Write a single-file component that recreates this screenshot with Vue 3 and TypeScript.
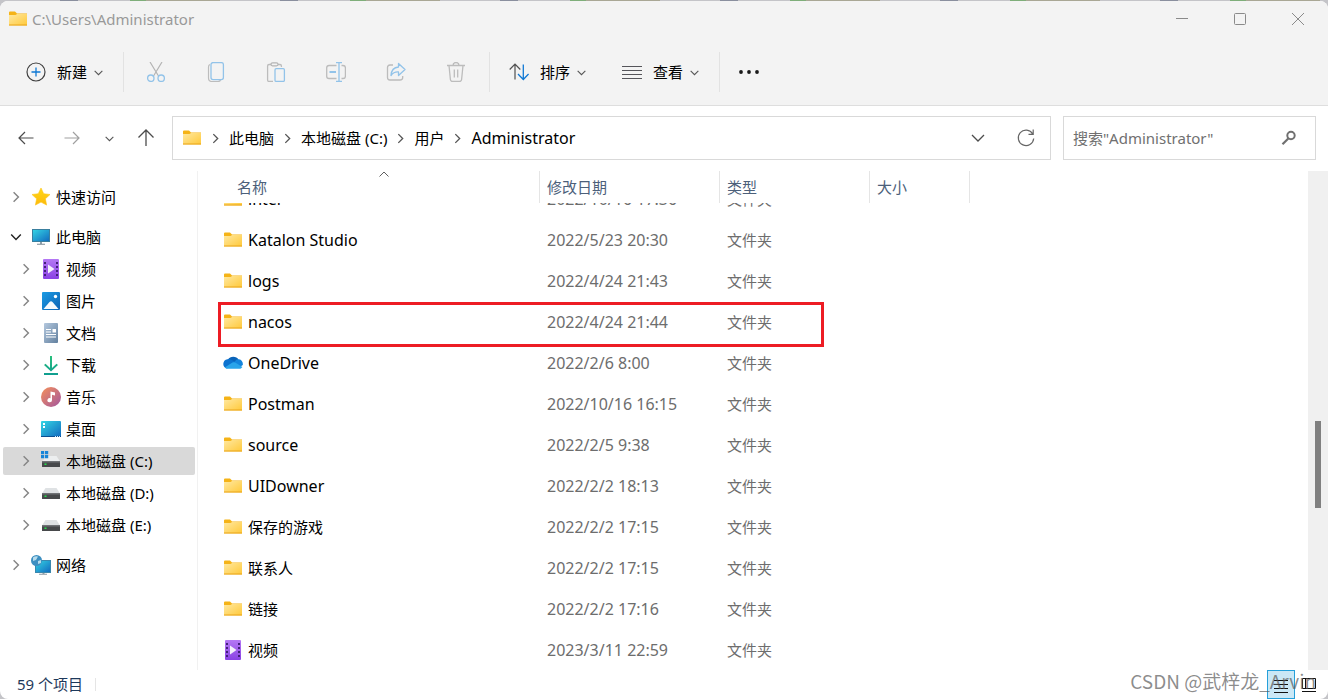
<script setup lang="ts">
import { onMounted, ref } from 'vue'

interface TreeItem {
  label: string
  icon: string
  level: 1 | 2
  open?: boolean
  selected?: boolean
  spaced?: boolean
}

interface FileRow {
  name: string
  icon: string
  date: string
  marked?: boolean
}

const tools = [
  { icon: 'cut', label: '剪切' },
  { icon: 'copy', label: '复制' },
  { icon: 'paste', label: '粘贴' },
  { icon: 'rename', label: '重命名' },
  { icon: 'share', label: '共享' },
  { icon: 'trash', label: '删除' },
]

const crumbs = ['此电脑', '本地磁盘 (C:)', '用户', 'Administrator']

const tree: TreeItem[] = [
  { label: '快速访问', icon: 'star', level: 1 },
  { label: '此电脑', icon: 'pc', level: 1, open: true, spaced: true },
  { label: '视频', icon: 'video', level: 2 },
  { label: '图片', icon: 'picture', level: 2 },
  { label: '文档', icon: 'document', level: 2 },
  { label: '下载', icon: 'download', level: 2 },
  { label: '音乐', icon: 'music', level: 2 },
  { label: '桌面', icon: 'desktop', level: 2 },
  { label: '本地磁盘 (C:)', icon: 'drive-c', level: 2, selected: true },
  { label: '本地磁盘 (D:)', icon: 'drive', level: 2 },
  { label: '本地磁盘 (E:)', icon: 'drive', level: 2 },
  { label: '网络', icon: 'network', level: 1, spaced: true },
]

const files: FileRow[] = [
  { name: 'intel', icon: 'folder', date: '2022/10/16 17:36' },
  { name: 'Katalon Studio', icon: 'folder', date: '2022/5/23 20:30' },
  { name: 'logs', icon: 'folder', date: '2022/4/24 21:43' },
  { name: 'nacos', icon: 'folder', date: '2022/4/24 21:44', marked: true },
  { name: 'OneDrive', icon: 'cloud', date: '2022/2/6 8:00' },
  { name: 'Postman', icon: 'folder', date: '2022/10/16 16:15' },
  { name: 'source', icon: 'folder', date: '2022/2/5 9:38' },
  { name: 'UIDowner', icon: 'folder', date: '2022/2/2 18:13' },
  { name: '保存的游戏', icon: 'folder', date: '2022/2/2 17:15' },
  { name: '联系人', icon: 'folder', date: '2022/2/2 17:15' },
  { name: '链接', icon: 'folder', date: '2022/2/2 17:16' },
  { name: '视频', icon: 'video', date: '2023/3/11 22:59' },
]

const isLatin = (s: string) => /^[\x20-\x7e]+$/.test(s)

const query = ref('')
const scroller = ref<HTMLElement | null>(null)

onMounted(() => {
  if (scroller.value) scroller.value.scrollTop = 25
})
</script>

<template>
  <div class="backdrop">
    <svg class="sprite" width="0" height="0" aria-hidden="true">
      <defs>
        <linearGradient id="g-folder" x1="0" y1="0" x2="1" y2="1">
          <stop offset="0" stop-color="#ffe8a0" /><stop offset="1" stop-color="#ffc93a" />
        </linearGradient>
        <linearGradient id="g-screen" x1="0" y1="0" x2="1" y2="1">
          <stop offset="0" stop-color="#35d6e4" /><stop offset="1" stop-color="#1169bf" />
        </linearGradient>
        <linearGradient id="g-video" x1="0" y1="0" x2="0" y2="1">
          <stop offset="0" stop-color="#b478f4" /><stop offset="1" stop-color="#8a42e4" />
        </linearGradient>
        <linearGradient id="g-picture" x1="0" y1="0" x2="1" y2="1">
          <stop offset="0" stop-color="#1b9be4" /><stop offset="1" stop-color="#0d62b4" />
        </linearGradient>
        <linearGradient id="g-doc" x1="0" y1="0" x2="1" y2="1">
          <stop offset="0" stop-color="#b4c8de" /><stop offset="1" stop-color="#62809f" />
        </linearGradient>
        <linearGradient id="g-music" x1="0" y1="0" x2="1" y2="1">
          <stop offset="0" stop-color="#f6915a" /><stop offset="1" stop-color="#a2569f" />
        </linearGradient>
        <linearGradient id="g-star" x1="0" y1="0" x2="0" y2="1">
          <stop offset="0" stop-color="#ffd817" /><stop offset="1" stop-color="#fdb90c" />
        </linearGradient>
        <linearGradient id="g-download" x1="0" y1="0" x2="0" y2="1">
          <stop offset="0" stop-color="#29c07c" /><stop offset="1" stop-color="#0f9d90" />
        </linearGradient>
      </defs>

      <symbol id="folder" viewBox="0 0 20 20">
        <path d="M1 3.600Q1 2.400 2 2.400h5L9 4.400h10V9H1z" fill="#f5b317" />
        <path d="M1 6h6.500l1.600-1H19v11.500H1z" fill="url(#g-folder)" />
        <path d="M1 15.500h18v1H1z" fill="#e9a51d" />
      </symbol>
      <symbol id="cloud" viewBox="0 0 20 20">
        <path d="M5 6.500A6 5.500 0 0 1 15.500 6.500L12 12z" fill="#0a63b8" />
        <path d="M4.500 6.200C7 5.500 9 7.200 13 9.500L4 15.600C-1.500 14.500-.5 6.500 4.500 6.200z" fill="#0c72cf" />
        <path d="M10 10.500l3.500-4C18 5.500 20.300 8.500 19.800 12l-3 2z" fill="#1384dc" />
        <path d="M2 14.300l7.500-4.700c1.500-.6 2.500-.2 3.500.4l6.400 4c-.8 1.300-2 1.800-3.400 1.800H5C3.500 15.800 2.700 15.300 2 14.300z" fill="#29a4ea" />
      </symbol>
      <symbol id="star" viewBox="0 0 20 20">
        <path d="M10 1l2.700 5.700 6.300.8-4.600 4.300 1.200 6.300L10 15.100 4.400 18.100l1.200-6.300L1 7.500l6.300-.8z" fill="url(#g-star)" stroke="#fec515" stroke-width=".6" stroke-linejoin="round" />
      </symbol>
      <symbol id="pc" viewBox="0 0 20 20">
        <path d="M9 14.500h2V17H9z" fill="#8fa0ac" /><path d="M6 16.800h8v1H6z" fill="#7b8a94" />
        <rect x="1.500" y="2.500" width="17" height="12" fill="url(#g-screen)" stroke="#3a7f9e" />
      </symbol>
      <symbol id="video" viewBox="0 0 20 20">
        <rect x="2" y="0" width="16" height="20" rx="1" fill="url(#g-video)" />
        <path d="M4 3v15M16 3v15" stroke="#43207a" stroke-width="2" stroke-dasharray="2 2" />
        <path d="M7 5.500v9L13.500 10z" fill="#f3effb" />
      </symbol>
      <symbol id="picture" viewBox="0 0 20 20">
        <rect x="1" y="1" width="18" height="18" rx="1" fill="url(#g-picture)" />
        <path d="M2.500 18l6-7q1.500-1.500 3 0l6 7z" fill="#f4f9fd" /><circle cx="14.500" cy="5.500" r="1.700" fill="#fff" />
      </symbol>
      <symbol id="document" viewBox="0 0 20 20">
        <rect x="3" y="0" width="14" height="20" rx="1" fill="url(#g-doc)" />
        <path d="M5 6.500h5M5 9h5M5 11.500h10M5 14h10" stroke="#fff" stroke-width="1.200" />
        <path d="M11.500 6h3.500v3.500h-3.500z" fill="#fff" />
      </symbol>
      <symbol id="download" viewBox="0 0 20 20">
        <path d="M9 1h2v12l4.500-4.300L17 10l-7 6.400L3 10l1.500-1.300L9 13zM3 18h14v2H3z" fill="url(#g-download)" />
      </symbol>
      <symbol id="music" viewBox="0 0 20 20">
        <circle cx="10" cy="10" r="10" fill="url(#g-music)" />
        <path d="M9.500 4.500l4.500 1v3l-3-.7v5.400a2.300 2.100 0 1 1-1.500-2z" fill="#fff" />
      </symbol>
      <symbol id="desktop" viewBox="0 0 20 20">
        <rect x="0" y="2" width="20" height="16" rx="1" fill="url(#g-screen)" />
        <path d="M2 4h2v2H2zM2 7h2v2H2z" fill="#fff" /><path d="M0 17h20v1H0z" fill="#0b4f91" />
        <path d="M14 17.500h1M16 17.500h1M18 17.500h1" stroke="#d7eaf8" />
      </symbol>
      <symbol id="drive" viewBox="0 0 20 20">
        <path d="M4.500 5h11L19 10.500H1z" fill="#dfe2e4" /><rect x="1" y="10" width="18" height="6" rx=".5" fill="#47494b" />
        <path d="M1 10h18v1.500H1z" fill="#707376" /><path d="M3.500 12.500h2v1.500h-2z" fill="#25e04c" />
      </symbol>
      <symbol id="drive-c" viewBox="0 0 20 20">
        <path d="M6 5h9.500L19 10.500H1z" fill="#eceeef" /><rect x="1" y="10" width="18" height="6" rx=".5" fill="#47494b" />
        <path d="M1 10h18v1.500H1z" fill="#707376" /><path d="M3.500 12.500h2v1.500h-2z" fill="#25e04c" />
        <path d="M0 0h3.200v3.200H0zM4 0h3.200v3.200H4zM0 4h3.200v3.200H0zM4 4h3.200v3.200H4z" fill="#1784d8" />
      </symbol>
      <symbol id="network" viewBox="0 0 20 20">
        <path d="M11.500 17h2v2h-2z" fill="#8fa0ac" /><path d="M8 18.800h8v1H8z" fill="#8c9aa3" />
        <rect x="4.500" y="5.500" width="15" height="12" fill="url(#g-screen)" stroke="#3a87ae" />
        <circle cx="5.500" cy="5.500" r="5.500" fill="#3d8fc1" />
        <path d="M2 2.500Q4.500.5 7 1.500L5 5 2 6zM7 6l3-1v3L7 9z" fill="#b7dcec" />
      </symbol>

      <symbol id="plus" viewBox="0 0 20 20">
        <circle cx="10" cy="10" r="9" fill="none" stroke="#404040" stroke-width="1.200" />
        <path d="M5.500 10h9M10 5.500v9" stroke="#0f78d4" stroke-width="1.300" />
      </symbol>
      <symbol id="cut" viewBox="0 0 20 20">
        <path d="M4 0l8.500 14M16 0L7.500 14" fill="none" stroke="#b4b4b4" stroke-width="1.200" />
        <circle cx="4.800" cy="16.200" r="3.200" fill="none" stroke="#92c3e9" stroke-width="1.300" />
        <circle cx="15.200" cy="16.200" r="3.200" fill="none" stroke="#92c3e9" stroke-width="1.300" />
      </symbol>
      <symbol id="copy" viewBox="0 0 20 20">
        <path d="M4 2.500Q2.500 3 2.500 5v11q0 3.500 3.500 3.500h6q2 0 2.500-1.500" fill="none" stroke="#bcbcbc" stroke-width="1.200" />
        <rect x="5" y=".6" width="12.400" height="17" rx="2" fill="none" stroke="#92c3e9" stroke-width="1.300" />
      </symbol>
      <symbol id="paste" viewBox="0 0 20 20">
        <path d="M5 2.500H3Q1.600 2.500 1.600 4v14q0 1.500 1.400 1.500h4M12 2.500h2q1.400 0 1.400 1.500v1" fill="none" stroke="#bcbcbc" stroke-width="1.300" />
        <rect x="5" y=".8" width="7" height="3" rx="1.500" fill="none" stroke="#b4b4b4" stroke-width="1.200" />
        <rect x="9" y="6.700" width="9.400" height="12.700" rx="1.200" fill="none" stroke="#92c3e9" stroke-width="1.300" />
      </symbol>
      <symbol id="rename" viewBox="0 0 20 20">
        <path d="M10.500 3.500H3q-2.300 0-2.300 2.300v8.400q0 2.300 2.300 2.300h7.500M15.500 3.500H17q2.400 0 2.400 2.300v8.400q0 2.300-2.400 2.300h-1.500" fill="none" stroke="#bcbcbc" stroke-width="1.300" />
        <path d="M3.500 10H10" stroke="#92c3e9" stroke-width="2" />
        <path d="M10 .6h6M10 19.400h6M13 .6v18.800" stroke="#92c3e9" stroke-width="1.300" />
      </symbol>
      <symbol id="share" viewBox="0 0 20 20">
        <path d="M7 3H4Q1.500 3 1.500 5.500v10Q1.500 18 4 18h10q2.700 0 2.700-2.500V14" fill="none" stroke="#bcbcbc" stroke-width="1.300" />
        <path d="M12.500 1.500l6.500 6-6.500 6V10Q8 9.500 5 13.500 5.500 5.500 12.500 5z" fill="none" stroke="#92c3e9" stroke-width="1.300" stroke-linejoin="round" />
      </symbol>
      <symbol id="trash" viewBox="0 0 20 20">
        <path d="M1 3.500h18M7 3.500a3 3 0 0 1 6 0M3 3.500l1.400 14q.2 2 2.200 2h6.800q2 0 2.200-2l1.400-14M8.300 7.500v8M11.700 7.500v8" fill="none" stroke="#bcbcbc" stroke-width="1.300" />
      </symbol>
      <symbol id="sort" viewBox="0 0 20 20">
        <path d="M.7 7.500l5.300-5.500 5.300 5.500M6 2v15.500" fill="none" stroke="#505050" stroke-width="1.200" />
        <path d="M9 12l5.300 5.500 5.300-5.500M14.300 17.500v-15" fill="none" stroke="#0f78d4" stroke-width="1.300" />
      </symbol>
      <symbol id="lines" viewBox="0 0 20 20">
        <path d="M0 4.500h20M0 8.500h20M0 12.500h20M0 16.500h20" stroke="#55555a" />
      </symbol>
      <symbol id="dots" viewBox="0 0 20 20">
        <circle cx="2" cy="10" r="1.900" fill="#1a1a1a" /><circle cx="10" cy="10" r="1.900" fill="#1a1a1a" /><circle cx="18" cy="10" r="1.900" fill="#1a1a1a" />
      </symbol>
      <symbol id="down" viewBox="0 0 10 10">
        <path d="M1.500 3.500L5 7l3.500-3.500" fill="none" stroke="currentColor" />
      </symbol>
      <symbol id="expand" viewBox="0 0 20 20">
        <path d="M4 7l6 6 6-6" fill="none" stroke="currentColor" stroke-width="1.300" />
      </symbol>
      <symbol id="right" viewBox="0 0 10 10">
        <path d="M3 1l4 4-4 4" fill="none" stroke="currentColor" stroke-width="1.200" />
      </symbol>
      <symbol id="back" viewBox="0 0 20 20">
        <path d="M9 4l-6 6 6 6M3 10h14.500" fill="none" stroke="currentColor" stroke-width="1.200" />
      </symbol>
      <symbol id="forward" viewBox="0 0 20 20">
        <path d="M11 4l6 6-6 6M17 10H2.500" fill="none" stroke="currentColor" stroke-width="1.200" />
      </symbol>
      <symbol id="up" viewBox="0 0 20 20">
        <path d="M2.500 9.500L10 2l7.500 7.500M10 2v16" fill="none" stroke="currentColor" stroke-width="1.300" />
      </symbol>
      <symbol id="refresh" viewBox="0 0 20 20">
        <path d="M16.700 6A7.700 7.700 0 1 0 17.700 10.500M17.200 1.500V6.300H12.500" fill="none" stroke="#666" stroke-width="1.200" />
      </symbol>
      <symbol id="search" viewBox="0 0 20 20">
        <circle cx="12" cy="7.500" r="3.700" fill="none" stroke="#707070" stroke-width="2" /><path d="M9.300 10.500L3.500 16.300" stroke="#707070" stroke-width="2.200" />
      </symbol>
    </svg>

    <div class="window">
      <header class="titlebar">
        <svg class="icon"><use href="#folder" /></svg>
        <span class="title">C:\Users\Administrator</span>
        <button class="caption" aria-label="最小化"><svg width="12" height="12"><path d="M0 5.500h12" stroke="#8a8a8a" /></svg></button>
        <button class="caption" aria-label="最大化"><svg width="12" height="12"><rect x=".5" y=".5" width="11" height="11" rx="1" fill="none" stroke="#8a8a8a" /></svg></button>
        <button class="caption" aria-label="关闭"><svg width="12" height="12"><path d="M0 0l12 12M12 0L0 12" stroke="#8a8a8a" /></svg></button>
      </header>

      <div class="commands">
        <button class="command">
          <svg class="icon"><use href="#plus" /></svg><span>新建</span><svg class="mini"><use href="#down" /></svg>
        </button>
        <i class="rule"></i>
        <button v-for="t in tools" :key="t.icon" class="tool" disabled :aria-label="t.label">
          <svg class="icon"><use :href="'#' + t.icon" /></svg>
        </button>
        <i class="rule"></i>
        <button class="command">
          <svg class="icon"><use href="#sort" /></svg><span>排序</span><svg class="mini"><use href="#down" /></svg>
        </button>
        <button class="command">
          <svg class="icon"><use href="#lines" /></svg><span>查看</span><svg class="mini"><use href="#down" /></svg>
        </button>
        <i class="rule"></i>
        <button class="command" aria-label="更多"><svg class="icon"><use href="#dots" /></svg></button>
      </div>

      <div class="navbar">
        <button class="nav" aria-label="后退"><svg class="icon"><use href="#back" /></svg></button>
        <button class="nav faded" aria-label="前进"><svg class="icon"><use href="#forward" /></svg></button>
        <button class="nav slim" aria-label="最近的位置"><svg class="mini"><use href="#down" /></svg></button>
        <button class="nav" aria-label="向上"><svg class="icon"><use href="#up" /></svg></button>
        <nav class="address" aria-label="地址">
          <svg class="icon"><use href="#folder" /></svg>
          <template v-for="c in crumbs" :key="c">
            <svg class="mini"><use href="#right" /></svg>
            <a class="crumb" :class="{ latin: isLatin(c) }" href="#">{{ c }}</a>
          </template>
          <span class="fill"></span>
          <button class="nav" aria-label="历史记录"><svg class="icon"><use href="#expand" /></svg></button>
          <button class="nav" aria-label="刷新"><svg class="icon"><use href="#refresh" /></svg></button>
        </nav>
        <label class="search">
          <input v-model="query" type="text" placeholder="搜索&quot;Administrator&quot;" aria-label="搜索" />
          <svg class="icon"><use href="#search" /></svg>
        </label>
      </div>

      <div class="body">
        <aside class="tree">
          <a
            v-for="item in tree"
            :key="item.label"
            href="#"
            class="node"
            :class="{ child: item.level === 2, selected: item.selected, spaced: item.spaced, open: item.open }"
          >
            <svg class="twist"><use href="#right" /></svg>
            <svg class="icon"><use :href="'#' + item.icon" /></svg>
            <span>{{ item.label }}</span>
          </a>
        </aside>

        <main ref="scroller" class="list">
          <table>
            <colgroup><col class="c-name" /><col class="c-date" /><col class="c-type" /><col class="c-size" /></colgroup>
            <thead>
              <tr>
                <th class="first">名称<svg class="sorted" width="10" height="6"><path d="M.5 5.500L5 1l4.500 4.500" fill="none" stroke="#606060" /></svg></th>
                <th>修改日期</th>
                <th>类型</th>
                <th>大小</th>
              </tr>
            </thead>
            <tbody>
              <tr v-for="f in files" :key="f.name">
                <td>
                  <div class="file">
                    <svg class="icon"><use :href="'#' + f.icon" /></svg>
                    <span :class="{ latin: isLatin(f.name) }">{{ f.name }}</span>
                  </div>
                  <i v-if="f.marked" class="marker"></i>
                </td>
                <td class="meta latin">{{ f.date }}</td>
                <td class="meta">文件夹</td>
                <td></td>
              </tr>
            </tbody>
          </table>
        </main>
        <div class="track"><div class="thumb"></div></div>
      </div>

      <footer class="status">
        <span class="count">59 个项目</span>
        <i class="tick"></i>
        <span class="fill"></span>
        <button class="mode active" aria-label="详细信息">
          <svg width="20" height="20"><path d="M3 5.500h14M3 9.500h14M3 13.500h14M3 17.500h14" stroke="#111" /></svg>
        </button>
        <button class="mode" aria-label="大图标">
          <svg width="20" height="20"><path d="M3.500 3.500h13v10h-13zM6.500 3.500v10M3 16.500h14" fill="none" stroke="#111" /></svg>
        </button>
        <span class="watermark">CSDN @武梓龙_Arvin</span>
      </footer>
    </div>
  </div>
</template>

<style>
body {
  background: #c6c6c6;
}
</style>

<style scoped>
.backdrop {
  box-sizing: border-box;
  height: 100vh;
  padding-top: 1px;
  background: repeating-linear-gradient(90deg, #c4c4c8 0 60px, #8a8f9e 60px 78px, #c4c4c8 78px 130px, #7fae7a 130px 146px, #a9a795 146px 220px);
  font: 15px/20px "Noto Sans", "Noto Sans CJK SC", sans-serif;
  color: #000;
}
.sprite {
  position: absolute;
}
.window {
  display: flex;
  flex-direction: column;
  height: 100%;
  border-radius: 8px;
  overflow: hidden;
  background: #fff;
}
button {
  display: flex;
  align-items: center;
  justify-content: center;
  margin: 0;
  padding: 0;
  border: 0;
  background: none;
  font: inherit;
  color: inherit;
}
a {
  color: inherit;
  text-decoration: none;
}
.icon {
  flex: none;
  width: 20px;
  height: 20px;
}
.mini {
  flex: none;
  width: 11px;
  height: 11px;
  color: #555;
}
.latin {
  font-size: 16px;
}
.fill {
  flex: 1;
}

.titlebar {
  display: flex;
  align-items: center;
  height: 36px;
  padding: 0 1px 2px 8px;
  background: #f3f3f3;
}
.title {
  flex: 1;
  margin-left: 4px;
  color: #999;
}
.caption {
  width: 58px;
  height: 36px;
}

.commands {
  display: flex;
  align-items: center;
  height: 66px;
  padding-left: 7px;
  border-bottom: 1px solid #dedede;
  background: #f3f3f3;
}
.command {
  height: 40px;
  padding: 0 16px 0 19px;
}
.command span {
  margin: 0 6px 0 11px;
}
.rule {
  width: 1px;
  height: 40px;
  margin: 0 2px 0 3px;
  background: #e2e2e2;
}
.rule + .command {
  margin-left: -2px;
}
.tool {
  width: 60px;
  height: 40px;
}

.navbar {
  display: flex;
  gap: 6px;
  height: 44px;
  padding: 10px 12px 11px 6px;
}
.nav {
  flex: none;
  width: 40px;
  color: #4c4c4c;
}
.slim {
  width: 22px;
}
.faded {
  color: #a0a0a0;
}
.address {
  display: flex;
  flex: 1;
  align-items: center;
  gap: 8px;
  padding: 0 4px 0 9px;
  border: 1px solid #d9d9d9;
}
.search {
  display: flex;
  align-items: center;
  box-sizing: border-box;
  width: 253px;
  margin-left: 6px;
  padding: 0 16px 0 9px;
  border: 1px solid #d9d9d9;
}
.search input {
  flex: 1;
  min-width: 0;
  padding: 0;
  border: 0;
  outline: 0;
  background: none;
  font: inherit;
}
.search input::placeholder {
  color: #707070;
  opacity: 1;
}

.body {
  display: flex;
  flex: 1;
  min-height: 0;
}
.tree {
  display: flex;
  flex-direction: column;
  gap: 4px;
  box-sizing: border-box;
  width: 198px;
  padding: 12px 2px 0 3px;
  border-right: 1px solid #f1f1f1;
}
.node {
  display: flex;
  align-items: center;
  height: 28px;
  padding-left: 7px;
  border-radius: 2px;
}
.child {
  padding-left: 17px;
}
.spaced {
  margin-top: 8px;
}
.selected {
  background: #d9d9d9;
}
.twist {
  width: 12px;
  height: 12px;
  margin-right: 9px;
  color: #858585;
}
.open .twist {
  transform: rotate(90deg);
  color: #222;
}
.node span {
  margin-left: 5px;
}

.list {
  flex: 1;
  min-width: 0;
  overflow: auto;
  scrollbar-width: none;
}
table {
  width: 772px;
  table-layout: fixed;
  border-collapse: separate;
  border-spacing: 0;
}
.c-name {
  width: 342px;
}
.c-date {
  width: 180px;
}
.c-type {
  width: 150px;
}
.c-size {
  width: 100px;
}
th {
  position: sticky;
  top: 0;
  z-index: 1;
  box-sizing: border-box;
  height: 32px;
  padding: 0 0 0 7px;
  border-right: 1px solid #e5e5e5;
  background: #fff;
  color: #4c607a;
  font-weight: 400;
  text-align: left;
}
.first {
  padding-left: 39px;
}
.sorted {
  position: absolute;
  top: 0;
  left: 181px;
}
td {
  position: relative;
  height: 41px;
  padding: 0;
}
.meta {
  padding-left: 7px;
  color: #6d6d6d;
}
.file {
  display: flex;
  align-items: center;
  gap: 5px;
  padding-left: 25px;
}
.marker {
  position: absolute;
  top: 1px;
  left: 20px;
  z-index: 1;
  box-sizing: border-box;
  width: 606px;
  height: 45px;
  border: 3px solid #ed1c24;
}
.track {
  display: flex;
  flex-direction: column;
  align-items: center;
  width: 20px;
  background: #f0f0f0;
}
.thumb {
  width: 6px;
  height: 87px;
  margin-top: 250px;
  background: #808080;
}

.status {
  position: relative;
  display: flex;
  align-items: center;
  height: 29px;
  padding: 0 5px 0 17px;
  color: #1e395b;
}
.count {
  padding-bottom: 2px;
}
.tick {
  width: 1px;
  height: 13px;
  margin-left: 12px;
  background: #e5e5e5;
}
.mode {
  box-sizing: border-box;
  width: 28px;
  height: 29px;
}
.active {
  border: 1px solid #26a0da;
  background: #cbe8f6;
}
.watermark {
  position: absolute;
  right: 12px;
  bottom: 8px;
  font-family: "Noto Sans CJK SC", sans-serif;
  font-size: 19px;
  color: rgba(90, 90, 90, 0.7);
}
</style>
